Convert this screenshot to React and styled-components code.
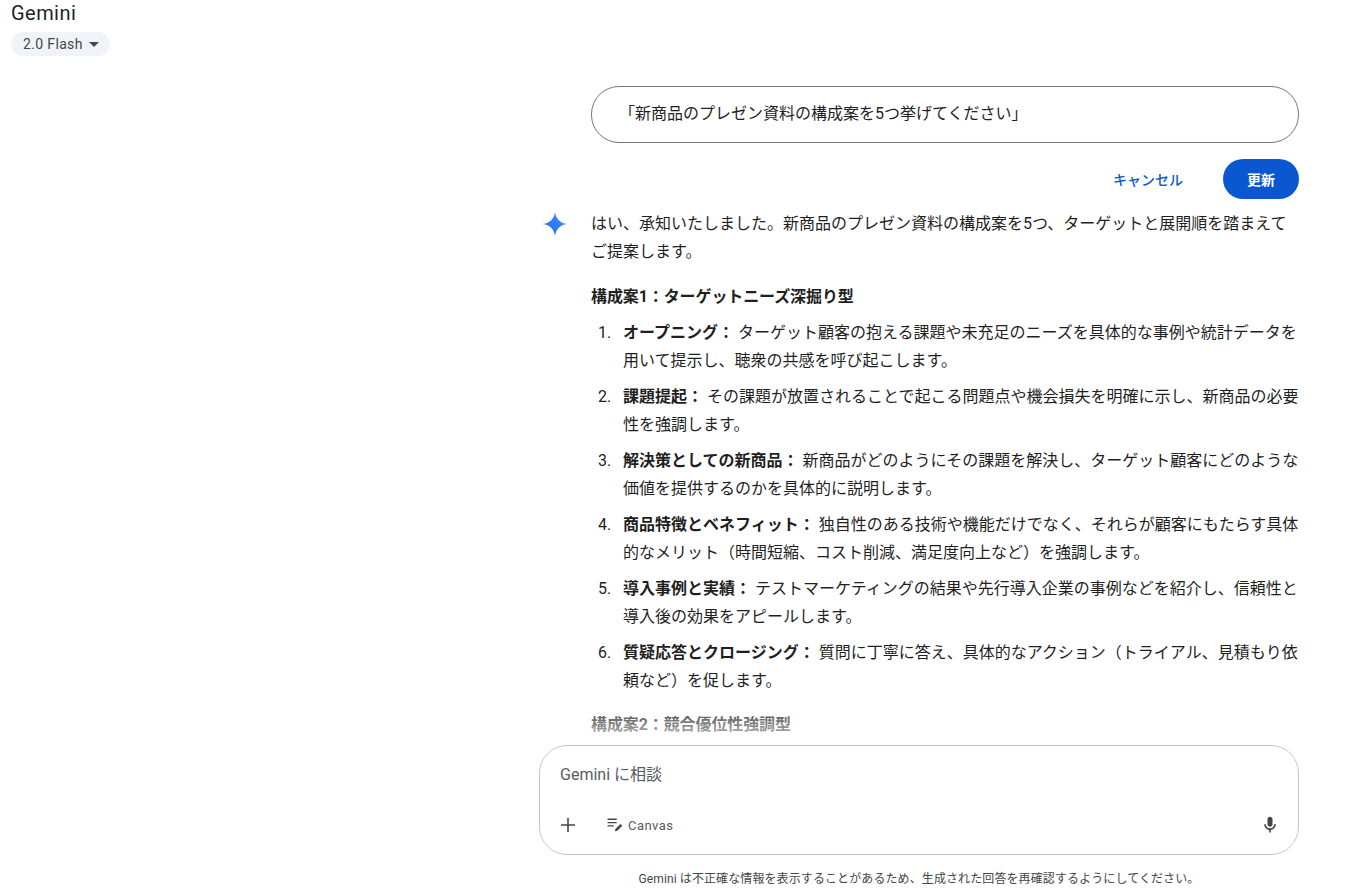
import React from "react";
import styled, { createGlobalStyle } from "styled-components";

const Global = createGlobalStyle`
  html, body { margin: 0; padding: 0; background: #fff; }
  body { font-family: Roboto, "Noto Sans CJK JP", sans-serif; color: #1f1f1f; }
  * { box-sizing: border-box; }
`;

const Page = styled.div`
  width: 1371px;
  height: 889px;
  overflow: hidden;
  display: flex;
  flex-direction: column;
  position: relative;
`;
const TopBar = styled.header`
  height: 56px;
  padding: 0 11px;
  display: flex;
  flex-direction: column;
  align-items: flex-start;
  flex: none;
`;
const Brand = styled.div`
  font-size: 20px;
  line-height: 26px;
  height: 32px;
  letter-spacing: 0.45px;
  color: #1f1f1f;
`;
const ModelPill = styled.div`
  height: 24px;
  width: 99px;
  border-radius: 12px;
  background: #f0f4f9;
  color: #444746;
  font-size: 14px;
  letter-spacing: 0.35px;
  display: flex;
  align-items: center;
  padding-left: 12px;
  gap: 6px;
`;
const Caret = styled.span`
  width: 0;
  height: 0;
  border-left: 5px solid transparent;
  border-right: 5px solid transparent;
  border-top: 5px solid #444746;
`;
const Column = styled.main`
  flex: 1;
  min-height: 0;
  width: 760px;
  margin-left: 539px;
  display: flex;
  flex-direction: column;
`;
const Scroll = styled.div`
  flex: 1;
  min-height: 0;
  overflow: hidden;
  padding-top: 30px;
`;
const EditBlock = styled.div`
  margin-left: 52px;
`;
const EditBox = styled.div`
  height: 57px;
  border: 1px solid #747775;
  border-radius: 28px;
  padding: 0 27px;
  font-size: 16px;
  line-height: 54px;
`;
const EditActions = styled.div`
  display: flex;
  justify-content: flex-end;
  align-items: center;
  gap: 40px;
  margin-top: 16px;
  font-size: 14px;
`;
const Cancel = styled.span`
  color: #0b57d0;
  font-weight: 500;
`;
const Update = styled.span`
  width: 76px;
  height: 40px;
  border-radius: 20px;
  background: #0b57d0;
  color: #fff;
  font-weight: 700;
  display: flex;
  align-items: center;
  justify-content: center;
`;
const Answer = styled.div`
  display: flex;
  margin-top: 11px;
`;
const Spark = styled.svg`
  width: 26px;
  height: 26px;
  margin: 1px 23px 0 3px;
  flex: none;
`;
const Body = styled.div`
  width: 708px;
  font-size: 16px;
  line-height: 28px;
`;
const Para = styled.p`
  margin: 0 0 17px;
`;
const Head = styled.p`
  margin: 0 0 8px;
  font-weight: 700;
  letter-spacing: -0.1px;
`;
const List = styled.ol`
  margin: 0 0 16px;
  padding: 0 0 0 32px;
`;
const Item = styled.li`
  margin-bottom: 8px;
  &:last-child { margin-bottom: 0; }
  &::marker { content: counter(list-item) ".\\00a0\\00a0\\00a0"; }
`;
const Label = styled.b`
  font-weight: 700;
`;
const Dock = styled.div`
  flex: none;
  position: relative;
  background: #fff;
  &::before {
    content: "";
    position: absolute;
    left: 0;
    right: 0;
    top: -44px;
    height: 44px;
    background: linear-gradient(to bottom, rgba(255,255,255,0), rgba(255,255,255,0.85));
  }
`;
const Composer = styled.div`
  height: 110px;
  border: 1px solid #c4c7c5;
  border-radius: 28px;
  padding: 17px 18px 0 20px;
  display: flex;
  flex-direction: column;
  justify-content: space-between;
`;
const Placeholder = styled.div`
  font-size: 16px;
  line-height: 24px;
  color: #575b5f;
`;
const Tools = styled.div`
  display: flex;
  align-items: center;
  height: 24px;
  margin-bottom: 17px;
`;
const ToolIcon = styled.svg`
  width: ${p => p.$s}px;
  height: ${p => p.$s}px;
  fill: ${p => p.$fill};
  flex: none;
`;
const ToolText = styled.span`
  font-size: 13px;
  letter-spacing: 0.45px;
  color: #575b5f;
  margin-left: 4px;
`;
const CanvasTool = styled.div`
  display: flex;
  align-items: center;
  margin-left: 28px;
  flex: 1;
`;
const Disclaimer = styled.div`
  height: 34px;
  font-size: 12px;
  line-height: 16px;
  padding-top: 16px;
  text-align: center;
  letter-spacing: 0.1px;
  color: #444746;
`;

const items = [
  ["オープニング：", "ターゲット顧客の抱える課題や未充足のニーズを具体的な事例や統計データを用いて提示し、聴衆の共感を呼び起こします。"],
  ["課題提起：", "その課題が放置されることで起こる問題点や機会損失を明確に示し、新商品の必要性を強調します。"],
  ["解決策としての新商品：", "新商品がどのようにその課題を解決し、ターゲット顧客にどのような価値を提供するのかを具体的に説明します。"],
  ["商品特徴とベネフィット：", "独自性のある技術や機能だけでなく、それらが顧客にもたらす具体的なメリット（時間短縮、コスト削減、満足度向上など）を強調します。"],
  ["導入事例と実績：", "テストマーケティングの結果や先行導入企業の事例などを紹介し、信頼性と導入後の効果をアピールします。"],
  ["質疑応答とクロージング：", "質問に丁寧に答え、具体的なアクション（トライアル、見積もり依頼など）を促します。"],
];

export default function App() {
  return (
    <Page>
      <Global />
      <TopBar>
        <Brand>Gemini</Brand>
        <ModelPill>2.0 Flash<Caret /></ModelPill>
      </TopBar>
      <Column>
        <Scroll>
          <EditBlock>
            <EditBox>「新商品のプレゼン資料の構成案を5つ挙げてください」</EditBox>
            <EditActions>
              <Cancel>キャンセル</Cancel>
              <Update>更新</Update>
            </EditActions>
          </EditBlock>
          <Answer>
            <Spark viewBox="0 0 28 28">
              <defs>
                <linearGradient id="sg" x1="0" y1="1" x2="1" y2="0">
                  <stop offset="0" stopColor="#1a73e8" />
                  <stop offset="0.55" stopColor="#2f7ff8" />
                  <stop offset="1" stopColor="#9b8cf5" />
                </linearGradient>
              </defs>
              <path fill="url(#sg)" d="M14 28C14 26.0633 13.6267 24.2433 12.88 22.54C12.1567 20.8367 11.165 19.355 9.905 18.095C8.645 16.835 7.16333 15.8433 5.46 15.12C3.75667 14.3733 1.93667 14 0 14C1.93667 14 3.75667 13.6383 5.46 12.915C7.16333 12.1683 8.645 11.165 9.905 9.905C11.165 8.645 12.1567 7.16333 12.88 5.46C13.6267 3.75667 14 1.93667 14 0C14 1.93667 14.3617 3.75667 15.085 5.46C15.8317 7.16333 16.835 8.645 18.095 9.905C19.355 11.165 20.8367 12.1683 22.54 12.915C24.2433 13.6383 26.0633 14 28 14C26.0633 14 24.2433 14.3733 22.54 15.12C20.8367 15.8433 19.355 16.835 18.095 18.095C16.835 19.355 15.8317 20.8367 15.085 22.54C14.3617 24.2433 14 26.0633 14 28Z" />
            </Spark>
            <Body>
              <Para>はい、承知いたしました。新商品のプレゼン資料の構成案を5つ、ターゲットと展開順を踏まえてご提案します。</Para>
              <Head>構成案1：ターゲットニーズ深掘り型</Head>
              <List>
                {items.map(([a, b]) => (
                  <Item key={a}><Label>{a}</Label> {b}</Item>
                ))}
              </List>
              <Head>構成案2：競合優位性強調型</Head>
            </Body>
          </Answer>
        </Scroll>
        <Dock>
          <Composer>
            <Placeholder>Gemini に相談</Placeholder>
            <Tools>
              <ToolIcon $s={18} $fill="#444746" viewBox="0 0 18 18">
                <path d="M7.2 2h1.6v6.2H15v1.6H8.8V16H7.2V9.8H1V8.2h6.2z" />
              </ToolIcon>
              <CanvasTool>
                <ToolIcon $s={18} $fill="#444746" viewBox="0 0 18 18">
                  <path d="M1.5 2.6h9.2v1.3H1.5zM1.5 5.9h9.2v1.3H1.5zM1.5 9.2h6.2v1.3H1.5z" />
                  <path d="M9 15.2l.4-2.3 5-5 1.9 1.9-5 5z" />
                </ToolIcon>
                <ToolText>Canvas</ToolText>
              </CanvasTool>
              <ToolIcon $s={20} $fill="#444746" viewBox="0 0 24 24">
                <path d="M12 14c1.66 0 3-1.34 3-3V5c0-1.66-1.34-3-3-3S9 3.34 9 5v6c0 1.66 1.34 3 3 3z" />
                <path d="M17 11c0 2.76-2.24 5-5 5s-5-2.24-5-5H5c0 3.53 2.61 6.43 6 6.92V21h2v-3.08c3.39-.49 6-3.39 6-6.92h-2z" />
              </ToolIcon>
            </Tools>
          </Composer>
          <Disclaimer>Gemini は不正確な情報を表示することがあるため、生成された回答を再確認するようにしてください。</Disclaimer>
        </Dock>
      </Column>
    </Page>
  );
}
